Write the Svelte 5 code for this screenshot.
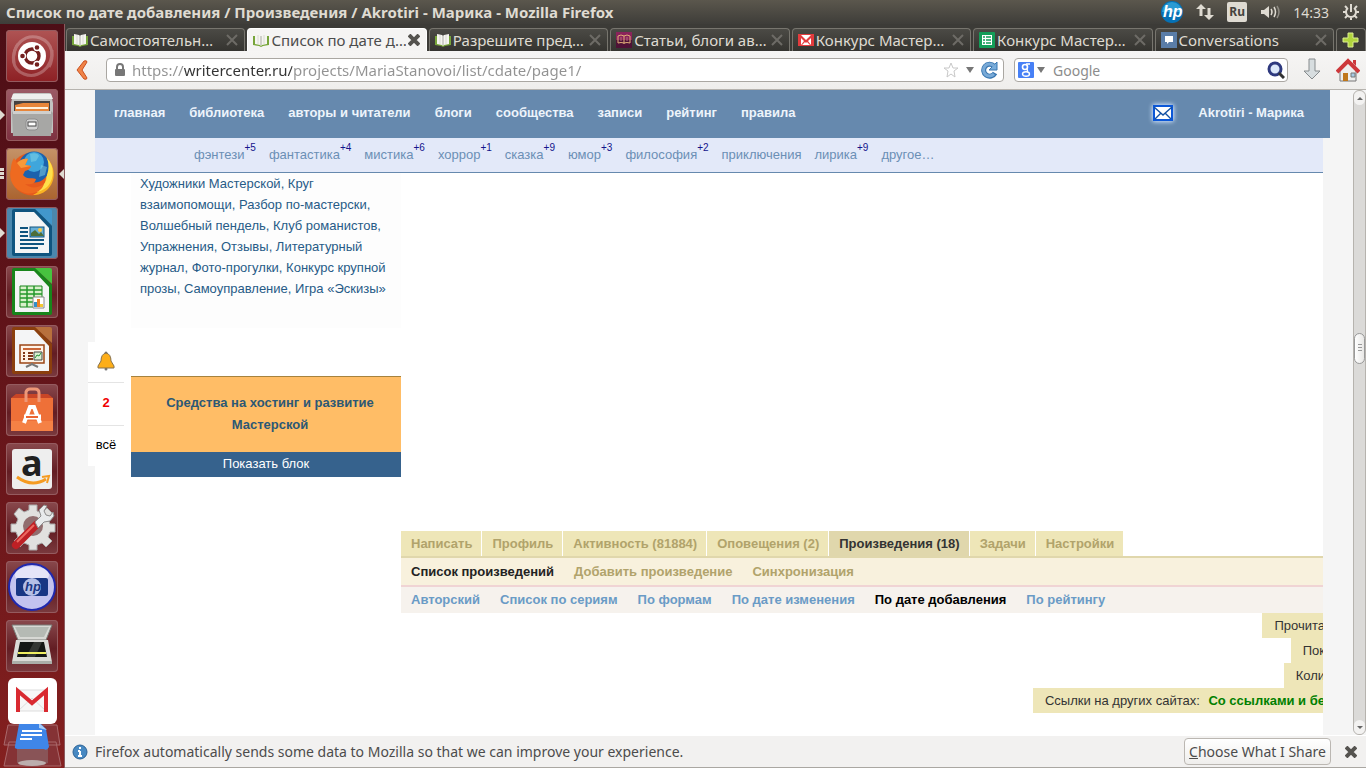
<script lang="ts">
	const launcher = [
		{ id: 'dash', label: 'Dash' },
		{ id: 'files', label: 'Files', running: true },
		{ id: 'firefox', label: 'Firefox', running: true, focused: true },
		{ id: 'writer', label: 'Writer', running: true },
		{ id: 'calc', label: 'Calc' },
		{ id: 'impress', label: 'Impress' },
		{ id: 'software', label: 'Software Center' },
		{ id: 'amazon', label: 'Amazon' },
		{ id: 'settings', label: 'Settings' },
		{ id: 'hp', label: 'HP' },
		{ id: 'scanner', label: 'Scanner' }
	];

	const tabs = [
		{ icon: 'book', title: 'Самостоятельн…' },
		{ icon: 'book', title: 'Список по дате д…', active: true },
		{ icon: 'book', title: 'Разрешите пред…' },
		{ icon: 'article', title: 'Статьи, блоги ав…' },
		{ icon: 'mail', title: 'Конкурс Мастер…' },
		{ icon: 'sheet', title: 'Конкурс Мастер…' },
		{ icon: 'chat', title: 'Conversations' }
	];

	const nav = ['главная', 'библиотека', 'авторы и читатели', 'блоги', 'сообщества', 'записи', 'рейтинг', 'правила'];

	const genres = [
		{ name: 'фэнтези', count: 5 },
		{ name: 'фантастика', count: 4 },
		{ name: 'мистика', count: 6 },
		{ name: 'хоррор', count: 1 },
		{ name: 'сказка', count: 9 },
		{ name: 'юмор', count: 3 },
		{ name: 'философия', count: 2 },
		{ name: 'приключения', count: 0 },
		{ name: 'лирика', count: 9 },
		{ name: 'другое…', count: 0 }
	];

	const communities = [
		'Художники Мастерской',
		'Круг взаимопомощи',
		'Разбор по-мастерски',
		'Волшебный пендель',
		'Клуб романистов',
		'Упражнения',
		'Отзывы',
		'Литературный журнал',
		'Фото-прогулки',
		'Конкурс крупной прозы',
		'Самоуправление',
		'Игра «Эскизы»'
	];

	const sections = ['Написать', 'Профиль', 'Активность (81884)', 'Оповещения (2)', 'Произведения (18)', 'Задачи', 'Настройки'];
	const actions = ['Список произведений', 'Добавить произведение', 'Синхронизация'];
	const sorts = ['Авторский', 'Список по сериям', 'По формам', 'По дате изменения', 'По дате добавления', 'По рейтингу'];

	let url = 'https://writercenter.ru/projects/MariaStanovoi/list/cdate/page1/';
	let query = '';
</script>

{#snippet appIcon(id)}
	<svg viewBox="0 0 52 52" width="52" height="52" aria-hidden="true">
		{#if id === 'dash'}
			<g fill="none" stroke="#fff" stroke-width="3" opacity=".25">
				<path d="M8 33C5 14 20 3 34 8s14 20 9 29" />
				<path d="M46 20C47 39 31 49 18 44S5 25 12 14" />
			</g>
			<circle cx="26" cy="26" r="14" fill="#fff" />
			<circle cx="26" cy="26" r="7" fill="none" stroke="#74201f" stroke-width="3.4" />
			<g stroke="#fff" stroke-width="1.4" fill="#74201f">
				<circle cx="16.5" cy="26" r="3" />
				<circle cx="31" cy="17.5" r="3" />
				<circle cx="31" cy="34.5" r="3" />
			</g>
		{:else if id === 'files'}
			<path d="M7 5q0-1 2-1h34q2 0 2 1l2 9v30H5V14z" fill="#c3c3c1" />
			<path d="M7 5h38l2 5H5z" fill="#eee" />
			<path d="M8 12h36v12H8z" fill="#464241" />
			<path d="M9 16l8-2h26v9H9z" fill="#e8863a" />
			<path d="M10 18h32v2H10z" fill="#fff1dc" />
			<path d="M7 22h38l2 2-2 23H7L6 24z" fill="#a7a7a5" />
			<path d="M7 22h38v3H7z" fill="#cfcfcd" />
			<rect x="20" y="30" width="12" height="11" rx="3" fill="#d3d3d3" stroke="#8d8d8d" />
			<rect x="22" y="33" width="8" height="4" fill="#fff" stroke="#444" />
		{:else if id === 'firefox'}
			<circle cx="26" cy="26" r="21.5" fill="#e65a1c" />
			<path d="M38 8c12 8 13 25 3 34-5 4-9 5-14 5 8-4 12-9 13-17z" fill="#f9b423" />
			<circle cx="28" cy="19" r="15.5" fill="#1c62ad" />
			<circle cx="28" cy="14" r="10" fill="#3fa6dc" />
			<path d="M24 6q7-2 9 2l-3 5-5 1zM35 17l6 2-2 8-6 2z" fill="#86d6e6" opacity=".5" />
			<path d="M41 10c7 7 8 20 1 28-5 5-10 6-14 6 9-5 13-10 13-17 2-6 2-11 0-17z" fill="#ffe04a" />
			<path d="M8 10l3 5c3-3 7-5 11-4l-3 6 6 1q-1 4-6 5l-2 4c4 5 8 2 13 4-1 5-6 6-11 5 6 5 13 4 19 0-2 7-10 11-19 9C8 42 2 32 5 21c0-4 1-8 3-11z" fill="#ee6a20" />
			<path d="M11 15c3-3 7-5 11-4l-3 6 6 1-10 2z" fill="#f79a3a" />
		{:else if id === 'writer' || id === 'calc' || id === 'impress'}
			{@const dark = id === 'writer' ? '#10547f' : id === 'calc' ? '#18851b' : '#8b3f0e'}
			{@const light = id === 'writer' ? '#4297cc' : id === 'calc' ? '#47c33f' : '#b8703c'}
			<path d="M8 2h22l16 17v28q0 2-2 2H8q-2 0-2-2V4q0-2 2-2z" fill={dark} />
			<path d="M29 2h15q2 0 2 2v14z" fill={light} />
			<path d="M9 5h19l15 16v25H9z" fill="#f4f5f6" />
			{#if id === 'writer'}
				<path d="M14 21h8M14 25h8M14 29h8M14 33h24M14 37h24M14 41h18" stroke={dark} stroke-width="2" />
				<rect x="24" y="20" width="14" height="10" fill="#67afd7" stroke={dark} />
				<path d="M25 29v-3l4-3 4 4 2-2 3 4z" fill="#4d6e38" /><circle cx="34" cy="23" r="2" fill="#f8c840" />
			{:else if id === 'calc'}
				<path d="M14 20h22v21H14z" fill="#d9f0cb" stroke={dark} />
				<path d="M14 24h22M14 28h22M14 32h22M14 36h22M21 20v21M28 20v21" stroke="#23982b" stroke-width="1.5" />
				<path d="M27 31h11v11H27z" fill="#fff" stroke="#888" /><path d="M28 36h3v5h-3z" fill="#328fc8" /><path d="M31 33h3v8h-3z" fill="#f08124" /><path d="M34 38h3v3h-3z" fill="#f3c832" />
			{:else}
				<path d="M14 20h24v18H14z" fill="#fff3e7" stroke="#9c4616" stroke-width="1.5" />
				<path d="M17 24h18" stroke="#ca6637" stroke-width="2" />
				<path d="M17 28h2m3 0h5m-10 3h2m3 0h5m-10 3h2m3 0h5" stroke="#803719" stroke-width="2" />
				<path d="M28 27h8v8h-8z" fill="#d8efd1" stroke="#444" /><path d="M29 33l2-3 2 1 2-3" stroke="#269537" fill="none" />
				<path d="M26 38v2m-6 2l6-3 6 3" stroke="#777" stroke-width="2" fill="none" />
			{/if}
		{:else if id === 'software'}
			<path d="M5 14h42v33H5z" fill="#ee7038" /><path d="M5 14l5-4h32l5 4z" fill="#c84526" />
			<path d="M5 37h42v10H5z" fill="#f58145" />
			<path d="M20 18V8q1-3 4-3h5q4 0 4 4v9" stroke="#ed9878" stroke-width="3" fill="none" />
			<path d="M18 39l6-16h4l6 16" stroke="#fff" stroke-width="4" fill="none" />
			<path d="M18 33h17" stroke="#fff" stroke-width="5" /><path d="M20 33h12" stroke="#ec6531" stroke-width="2" />
		{:else if id === 'amazon'}
			<rect x="6" y="6" width="40" height="40" rx="3" fill="#eee" />
			<text x="15" y="33" font-family="Noto Sans, sans-serif" font-size="36" font-weight="700" fill="#202020">a</text>
			<path d="M11 34q15 11 29 2" stroke="#f59b22" stroke-width="3" fill="none" /><path d="M36 34l7-1-2 7" stroke="#f59b22" stroke-width="2" fill="none" />
		{:else if id === 'settings'}
			<g transform="translate(27 24)">
				<path d="M-4-21h8v6l5 2 5-5 6 6-5 5 2 5h5v8h-5l-2 5 4 4-6 6-4-4-5 2v5h-8v-5l-5-2-4 4-6-6 4-4-2-5h-5v-8h5l2-5-4-5 5-6 5 4 5-2z" fill="#e1e1df" stroke="#aaa" />
				<circle r="10" fill="#916d6e" />
			</g>
			<path d="M10 43l20-20" stroke="#be2025" stroke-width="8" stroke-linecap="round" /><path d="M11 40l17-17" stroke="#ed6960" stroke-width="2" />
			<path d="M29 20l6-6-2-6 5-5 3 1-3 5 2 4 4 1 3-4 1 4-4 5-6 1-6 6z" fill="#e8ebec" stroke="#8c8c8c" />
		{:else if id === 'hp'}
			<circle cx="26" cy="26" r="23" fill="#c3c3ef" stroke="#2029ae" stroke-width="2" />
			<ellipse cx="26" cy="14" rx="17" ry="9" fill="#fff" opacity=".55" />
			<rect x="10" y="17" width="32" height="18" rx="2" fill="#183684" />
			<circle cx="26" cy="26" r="9" fill="#b4bfe6" /><text x="19" y="30" font-family="Liberation Sans, sans-serif" font-size="13" font-style="italic" font-weight="700" fill="#183684">hp</text>
		{:else if id === 'scanner'}
			<path d="M6 5h40l-6 15H12z" fill="#d7d8d4" stroke="#7a7d78" /><path d="M9 7h34l-5 10H14z" fill="#b5bab4" />
			<path d="M10 20h32l4 22H6z" fill="#dadbd7" /><path d="M14 22h24l3 15H11z" fill="#141714" />
			<path d="M28 22h8l-7 15h-9z" fill="#343733" /><path d="M12 33h28" stroke="#eeee61" stroke-width="2" /><path d="M6 41h40v3H6z" fill="#aaafa9" />
		{/if}
	</svg>
{/snippet}

{#snippet favicon(id)}
	<svg viewBox="0 0 16 16" width="16" height="16" aria-hidden="true">
		{#if id === 'book'}
			<path d="M0 4h16v9l-6 1-2 1-2-1-6-1z" fill="#77a53a" />
			<path d="M2 2l5 1 1 1 1-1 5-1v10l-5 1-1 1-1-1-5-1z" fill="#f5f5f0" />
			<path d="M8 4v9" stroke="#a9a9a4" />
			<path d="M5 3v9M11 3v9" stroke="#d9d9d4" />
		{:else if id === 'article'}
			<path d="M0 0h16v16H0z" fill="#4f1236" /><path d="M0 0h16v8H0z" fill="#8a235b" /><path d="M2 4q3-2 6 0 3-2 6 0v7q-3-1-6 0-3-1-6 0zM8 4v8" fill="none" stroke="#e0ae78" />
			<path d="M5 5v4M11 5v4" stroke="#b5717a" />
		{:else if id === 'mail'}
			<path d="M0 2h16v12H0z" fill="#e33b3d" /><path d="M3 3h10L8 8zM3 6l3 3-3 4zM13 6l-3 3 3 4zM4 13l3-3 1 1 1-1 3 3z" fill="#fff" />
		{:else if id === 'sheet'}
			<rect width="16" height="16" rx="1" fill="#139d58" /><path d="M3 3h10v10H3z" fill="#fff" /><path d="M4 5h2m1 0h5M4 8h2m1 0h5M4 11h2m1 0h5" stroke="#139d58" stroke-width="1.6" />
		{:else}
			<path d="M0 0h16v16H0z" fill="#5a7da8" /><path d="M4 4h8v6H8l-2 2v-2H4z" fill="#fff" />
		{/if}
	</svg>
{/snippet}

{#snippet cross(weight)}
	<svg viewBox="0 0 12 12" width="12" height="12" aria-hidden="true"><path d="M1 1l10 10M11 1L1 11" stroke="currentColor" stroke-width={weight} /></svg>
{/snippet}

<div class="desktop">
	<header class="panel">
		<h1>Список по дате добавления / Произведения / Akrotiri - Марика - Mozilla Firefox</h1>
		<div class="indicators">
			<svg viewBox="0 0 22 22" width="22" height="22" aria-hidden="true"><circle cx="11" cy="11" r="11" fill="#0571b5" /><path d="M1 11a10 10 0 0 1 20 0" fill="#2b9bd3" /><text x="2" y="16" font-family="Liberation Sans, sans-serif" font-size="16" font-style="italic" font-weight="700" fill="#fff">hp</text></svg>
			<svg viewBox="0 0 18 18" width="18" height="18" aria-hidden="true"><path d="M5 13V5M13 5v8" stroke="#dfdbd2" stroke-width="3" /><path d="M0 6l5-5 5 5zM8 12l5 5 5-5z" fill="#dfdbd2" /></svg>
			<span class="keyboard">Ru</span>
			<svg viewBox="0 0 20 18" width="20" height="18" aria-hidden="true"><path d="M1 7h3l5-4v12l-5-4H1z" fill="#dfdbd2" /><path d="M11 6q2 3 0 6M14 4q3 5 0 10" fill="none" stroke="#dfdbd2" stroke-width="1.5" /><path d="M17 3q4 6 0 12" fill="none" stroke="#8d8a82" stroke-width="1.5" /></svg>
			<time>14:33</time>
			<svg viewBox="0 0 18 18" width="18" height="18" aria-hidden="true"><path d="M6 5a5 5 0 1 0 6 0M9 1v8M9 15v2M1 9h3M14 9h3M3 3l2 2M15 3l-2 2M3 15l2-2M15 15l-2-2" fill="none" stroke="#dfdbd2" stroke-width="2" /></svg>
		</div>
	</header>

	<div class="workspace">
		<nav class="launcher" aria-label="Launcher">
			{#each launcher as app (app.id)}
				<button class="app {app.id}" class:running={app.running} class:focused={app.focused} aria-label={app.label}>
					{@render appIcon(app.id)}
				</button>
			{/each}
			<button class="stack" aria-label="Gmail">
				<svg viewBox="0 0 65 92" width="65" height="92" aria-hidden="true">
					<path d="M8 50h49l3 20H4zM9 67h47l5 24H4z" fill="#853235" stroke="#a9686b" />
					<path d="M17 67h31v21q-15 7-31 0z" fill="#895457" /><ellipse cx="32" cy="88" rx="14" ry="3" fill="#bcaead" />
					<path d="M19 49h22l5 5 3 18q-2 4-5 2H18q-4 0-3-3z" fill="#3f86e8" /><path d="M39 48l8 7-8-2z" fill="#a9cef7" />
					<path d="M22 56h20M21 60h21M20 64h12" stroke="#fff" stroke-width="2" />
					<rect x="8" y="3" width="49" height="46" rx="6" fill="#fff" />
					<path d="M18 15h28v21H18z" fill="#f7f7f7" stroke="#ddd" /><path d="M18 36l14-13 14 13" fill="none" stroke="#ddd" />
					<path d="M18 37V16l14 12 14-12v21" fill="none" stroke="#d92a31" stroke-width="4" />
				</svg>
			</button>
		</nav>

		<div class="browser">
			<div class="tabs" role="tablist">
				{#each tabs as tab}
					<div class="tab" class:active={tab.active} role="tab" aria-selected={!!tab.active} tabindex="0">
						{@render favicon(tab.icon)}
						<span>{tab.title}</span>
						<button aria-label="Закрыть">{@render cross(tab.active ? 4 : 2)}</button>
					</div>
				{/each}
				<button class="new-tab" aria-label="Новая вкладка">
					<svg viewBox="0 0 18 18" width="18" height="18" aria-hidden="true"><path d="M6 2h5v5h5v4h-5v5H6v-5H1V7h5z" fill="#b0d43d" stroke="#dced92" /></svg>
				</button>
			</div>

			<div class="toolbar">
				<button class="back" aria-label="Назад">
					<svg viewBox="0 0 14 22" width="14" height="22" aria-hidden="true"><path d="M9 2q3-1 3 1l-5 8 5 8q0 2-3 1L2 11z" fill="#f08347" stroke="#c9501f" /></svg>
				</button>
				<div class="field address">
					<svg viewBox="0 0 12 14" width="12" height="14" aria-hidden="true"><path d="M3 6V4q0-3 3-3t3 3v2" fill="none" stroke="#777" stroke-width="2" /><rect x="1" y="6" width="10" height="7" rx="1" fill="#777" /></svg>
					<input aria-label="Адрес" bind:value={url} />
					<svg viewBox="0 0 16 16" width="16" height="16" aria-hidden="true"><path d="M8 1l2 5h5l-4 3 1 6-4-3-4 3 1-6-4-3h5z" fill="#fff" stroke="#c8c8c8" /></svg>
					<svg viewBox="0 0 10 8" width="10" height="8" aria-hidden="true"><path d="M1 1h8L5 7z" fill="#777" /></svg>
					<svg viewBox="0 0 18 18" width="18" height="18" aria-hidden="true"><path d="M14 12a6 6 0 1 1-1-7" fill="none" stroke="#3977b1" stroke-width="5" /><path d="M16 1v8H8z" fill="#78addc" stroke="#3977b1" /><path d="M13 13a6 6 0 1 1 0-8" fill="none" stroke="#79aad7" stroke-width="3" /></svg>
				</div>
				<div class="field search">
					<svg viewBox="0 0 16 16" width="16" height="16" aria-hidden="true"><rect width="16" height="16" rx="1" fill="#4780f6" /><circle cx="7" cy="5" r="2.5" fill="none" stroke="#fff" stroke-width="1.6" /><ellipse cx="8" cy="12" rx="3.5" ry="2.3" fill="none" stroke="#fff" stroke-width="1.4" /><path d="M8 2h4M9 7q1 1 0 3" fill="none" stroke="#fff" stroke-width="1.4" /></svg>
					<svg viewBox="0 0 10 8" width="10" height="8" aria-hidden="true"><path d="M1 1h8L5 7z" fill="#777" /></svg>
					<input aria-label="Поиск" placeholder="Google" bind:value={query} />
					<svg viewBox="0 0 18 18" width="18" height="18" aria-hidden="true"><circle cx="8" cy="8" r="6" fill="#dce8f9" stroke="#2e397e" stroke-width="3" /><path d="M12 12l5 5" stroke="#333" stroke-width="3" /></svg>
				</div>
				<button class="tool" aria-label="Загрузки">
					<svg viewBox="0 0 20 24" width="20" height="24" aria-hidden="true"><path d="M7 1h6v12h5l-8 8-8-8h5z" fill="#d7dddf" stroke="#868b8d" /></svg>
				</button>
				<button class="tool" aria-label="Домой">
					<svg viewBox="0 0 24 24" width="24" height="24" aria-hidden="true"><path d="M4 12l8-7 8 7v11H4z" fill="#eee" stroke="#777" /><path d="M1 14L12 3l11 11" fill="none" stroke="#cd383b" stroke-width="4" /><path d="M17 2h3v6l-3-3z" fill="#cd383b" /><path d="M7 15h5v8H7z" fill="#bf771b" /><path d="M15 15h4v4h-4z" fill="#a7cbe6" stroke="#777" /></svg>
				</button>
			</div>

			<div class="viewport">
				<div class="page">
					<header class="site-header">
						<nav>
							{#each nav as item}<a href="#top">{item}</a>{/each}
						</nav>
						<a class="inbox" href="#inbox" aria-label="Почта">
							<svg viewBox="0 0 20 16" width="20" height="16" aria-hidden="true"><path d="M1 1h18v14H1z" fill="#fff" stroke="#0b57d8" stroke-width="2" /><path d="M1 2l9 8 9-8M2 14l6-6M18 14l-6-6" fill="none" stroke="#1451a3" stroke-width="1.4" /></svg>
						</a>
						<a href="#user">Akrotiri - Марика</a>
					</header>
					<div class="sheet">
						<nav class="genres">
							{#each genres as genre}
								<a href="#genre">{genre.name}{#if genre.count}<sup>+{genre.count}</sup>{/if}</a>
							{/each}
						</nav>
						<div class="columns">
							<aside>
								<p class="communities">
									{#each communities as community, i}<a href="#community">{community}</a>{i < communities.length - 1 ? ', ' : ''}{/each}
								</p>
								<section class="funds">
									<h2>Средства на хостинг и развитие Мастерской</h2>
									<button>Показать блок</button>
								</section>
							</aside>
							<main>
								<nav class="sections">
									{#each sections as item}<a href="#section" class:current={item.startsWith('Произведения')}>{item}</a>{/each}
								</nav>
								<nav class="actions">
									{#each actions as item, i}<a href="#action" class:current={i === 0}>{item}</a>{/each}
								</nav>
								<nav class="sorts">
									{#each sorts as item, i}<a href="#sort" class:current={i === 4}>{item}</a>{/each}
								</nav>
								<div class="filters">
									<div>Прочита</div>
									<div>Пок</div>
									<div>Коли</div>
									<div>Ссылки на других сайтах: <a href="#links">Со ссылками и бе</a></div>
								</div>
							</main>
						</div>
					</div>
				</div>
				<div class="notices">
					<a href="#bell" aria-label="Оповещения">
						<svg viewBox="0 0 18 20" width="18" height="20" aria-hidden="true"><circle cx="9" cy="2" r="1.5" fill="#777" /><circle cx="9" cy="18" r="1.5" fill="#777" /><path d="M9 2q5 1 5 8l3 5v2H1v-2l3-5q0-7 5-8z" fill="#fdae19" stroke="#87724e" /></svg>
					</a>
					<a class="count" href="#new">2</a>
					<a href="#all">всё</a>
				</div>
				<div class="scrollbar" aria-hidden="true">
					<i class="up"></i>
					<i class="thumb"></i>
					<i class="down"></i>
				</div>
			</div>

			<footer class="infobar">
				<svg viewBox="0 0 16 16" width="16" height="16" aria-hidden="true"><circle cx="8" cy="8" r="7" fill="#4889c2" stroke="#2c6295" /><path d="M8 3v2M8 7v5M6 12h4M6 7h2" stroke="#fff" stroke-width="2" /></svg>
				<p>Firefox automatically sends some data to Mozilla so that we can improve your experience.</p>
				<button class="choose"><u>C</u>hoose What I Share</button>
				<button class="dismiss" aria-label="Закрыть">{@render cross(4)}</button>
			</footer>
		</div>
	</div>
</div>

<style>
	:global(body) {
		background: #f5f5f5;
	}

	.desktop {
		display: flex;
		flex-direction: column;
		height: 100vh;
		overflow: hidden;
		font-family: 'Noto Sans', sans-serif;
		font-size: 14px;
		color: #4c4c4c;
	}

	.desktop * {
		box-sizing: border-box;
	}

	button {
		padding: 0;
		border: 0;
		background: none;
		color: inherit;
		font: inherit;
	}

	a {
		color: inherit;
		text-decoration: none;
	}

	svg {
		display: block;
		flex: none;
	}

	h1, h2, p {
		margin: 0;
	}

	.panel {
		display: flex;
		align-items: center;
		justify-content: space-between;
		height: 24px;
		padding: 0 6px;
		background: linear-gradient(#5b574d, #3e3d39);
		color: #dfdbd2;
	}

	.panel h1 {
		font-size: 15px;
		line-height: 24px;
		white-space: nowrap;
	}

	.indicators {
		display: flex;
		align-items: center;
		gap: 13px;
	}

	.keyboard {
		width: 20px;
		height: 20px;
		border-radius: 2px;
		background: #dfdbd2;
		color: #45433e;
		font-size: 12px;
		font-weight: bold;
		line-height: 20px;
		text-align: center;
	}

	.workspace {
		display: flex;
		flex: 1;
		min-height: 0;
	}

	.launcher {
		display: flex;
		flex: none;
		flex-direction: column;
		align-items: center;
		gap: 7px;
		width: 65px;
		padding-top: 6px;
		border-right: 1px solid #8b5a5e;
		background: linear-gradient(#4d0e16, #6c171b 65%, #84201f);
		overflow: hidden;
	}

	.app {
		position: relative;
		flex: none;
		width: 52px;
		height: 52px;
		border-radius: 4px;
		background: linear-gradient(#89494d, #631d23 55%, #7a3a3e);
		box-shadow: inset 0 0 0 1px #955b5f;
	}

	.app.dash {
		background: linear-gradient(#af5454, #8d2024);
	}

	.app.files {
		background: linear-gradient(#9c5a66, #7d3040);
	}

	.app.firefox {
		background: linear-gradient(#c59368, #aa632f);
	}

	.app.writer {
		background: #4b87ad;
	}

	.app.running::before,
	.app.focused::after {
		content: '';
		position: absolute;
		top: 21px;
		left: -6px;
		border: 5px solid transparent;
		border-left-color: #dfdbd2;
		border-right-width: 0;
	}

	.app.focused::before {
		top: 20px;
		height: 11px;
		width: 4px;
		border: 0;
		background: repeating-linear-gradient(#dfdbd2 0 3px, transparent 3px 4px);
	}

	.app.focused::after {
		left: auto;
		right: -6px;
		border-width: 5px 5px 5px 0;
		border-right-color: #dfdbd2;
	}

	.stack {
		flex: none;
		margin-top: -4px;
	}

	.browser {
		display: flex;
		flex: 1;
		flex-direction: column;
		min-width: 0;
		background: #f2f1f0;
	}

	.tabs {
		display: flex;
		gap: 2px;
		height: 27px;
		padding: 4px 0 0 1px;
		background: #3c3b37;
		color: #dfdbd2;
		font-size: 15px;
	}

	.tab {
		display: flex;
		flex: 1;
		align-items: center;
		gap: 2px;
		min-width: 0;
		padding: 0 6px 0 5px;
		border: 1px solid #77756e;
		border-bottom: 0;
		border-radius: 4px 4px 0 0;
		background: linear-gradient(#4b4a45, #353430);
	}

	.tab span {
		flex: 1;
		overflow: hidden;
		line-height: 22px;
		white-space: nowrap;
	}

	.tab button {
		color: #6d6b66;
	}

	.tab.active {
		border-color: #fff;
		background: #f5f4f3;
		color: #4c4c4c;
	}

	.tab.active button {
		color: #55534f;
	}

	.new-tab {
		display: grid;
		place-items: center;
		width: 30px;
		border: 1px solid #77756e;
		border-bottom: 0;
		border-radius: 4px 4px 0 0;
	}

	.toolbar {
		display: flex;
		align-items: center;
		gap: 10px;
		height: 39px;
		padding: 0 6px 0 10px;
		border-bottom: 1px solid #b6b3ae;
		background: linear-gradient(#f6f5f4, #efeeec);
	}

	.back {
		width: 21px;
	}

	.tool {
		margin-left: 4px;
	}

	.field {
		display: flex;
		align-items: center;
		gap: 6px;
		height: 24px;
		border: 1px solid #aaa7a2;
		border-radius: 4px;
		background: #fff;
	}

	.address {
		flex: 1;
		padding: 0 4px 0 7px;
	}

	.search {
		gap: 2px;
		width: 274px;
		padding: 0 2px 0 3px;
	}

	.field input {
		flex: 1;
		min-width: 0;
		padding: 0;
		border: 0;
		outline: 0;
		background: none;
		color: #4c4c4c;
		font: inherit;
	}

	/* the host name stands out from the rest of the address */
	.address input {
		background: linear-gradient(to right, #929292 52px, #333 52px 160px, #929292 160px);
		background-clip: text;
		-webkit-background-clip: text;
		color: transparent;
		font-size: 15px;
	}

	.search input {
		padding-left: 5px;
	}

	.field input::placeholder {
		color: #8c8c8c;
	}

	.viewport {
		display: flex;
		position: relative;
		flex: 1;
		gap: 23px;
		min-height: 0;
		padding-left: 30px;
		overflow: hidden;
		background: #f5f5f5;
		font-family: 'Liberation Sans', Arial, sans-serif;
		font-size: 13px;
		line-height: 22px;
	}

	.page {
		display: flex;
		flex: 1;
		flex-direction: column;
		min-width: 0;
	}

	.site-header {
		display: flex;
		flex: none;
		align-items: center;
		height: 48px;
		padding: 0 26px 2px 19px;
		background: #6689ae;
		color: #edf4fb;
		font-weight: bold;
	}

	.site-header nav {
		display: flex;
		flex: 1;
		gap: 24px;
	}

	.inbox {
		margin-right: 25px;
		border-radius: 2px;
		box-shadow: 0 0 4px 1px #cde2ff;
	}

	.sheet {
		flex: 1;
		min-height: 0;
		margin-right: 7px;
		overflow: hidden;
		background: #fff;
	}

	.genres {
		display: flex;
		gap: 13px;
		height: 35px;
		padding: 6px 0 0 99px;
		border-bottom: 1px solid #6689ae;
		background: #e3e9f9;
		color: #6b8fb5;
		white-space: nowrap;
	}

	sup {
		color: #14148b;
		font-size: 10px;
		line-height: 0;
		vertical-align: 8px;
	}

	.columns {
		display: grid;
		grid-template-columns: 270px minmax(0, 1fr);
		row-gap: 54px;
		padding-left: 36px;
	}

	.communities {
		height: 155px;
		padding: 0 8px 0 9px;
		background: #fdfdfd;
		color: #275b87;
		line-height: 21px;
	}

	.funds {
		margin-top: 48px;
		border-top: 1px solid #a6823e;
		background: #ffbd66;
		text-align: center;
	}

	.funds h2 {
		padding: 15px 20px 16px 28px;
		color: #2c5875;
		font-size: 13px;
		line-height: 22px;
	}

	.funds button {
		width: 100%;
		height: 25px;
		padding-bottom: 2px;
		background: #36628d;
		color: #fff;
	}

	main {
		grid-row: 2;
		grid-column: 2;
		font-weight: bold;
		white-space: nowrap;
	}

	.sections,
	.actions,
	.sorts {
		display: flex;
	}

	.sections {
		gap: 1px;
		border-bottom: 2px solid #e0d7ac;
		color: #b1a36b;
		line-height: 25px;
	}

	.sections a {
		padding: 0 9px 0 10px;
		background: #eee6b8;
	}

	.sections .current {
		background: #e0d7ac;
		color: #333;
	}

	.actions,
	.sorts {
		gap: 20px;
		padding: 0 10px;
	}

	.actions {
		border-bottom: 2px solid #f0d4d4;
		background: #f8f1dd;
		color: #b1a36b;
		line-height: 27px;
	}

	.actions .current {
		color: #222;
	}

	.sorts {
		background: #f6f2ed;
		color: #6a9bc6;
		line-height: 26px;
	}

	.sorts .current {
		color: #000;
	}

	.filters {
		display: flex;
		flex-direction: column;
		align-items: flex-end;
		margin-right: -2px;
		color: #333;
		font-weight: normal;
		line-height: 25px;
	}

	.filters div {
		padding-left: 12px;
		background: #eee6b8;
	}

	.filters a {
		margin-left: 5px;
		color: #008000;
		font-weight: bold;
	}

	/* floats over the left edge of the page */
	.notices {
		position: absolute;
		top: 252px;
		left: 23px;
		width: 36px;
		background: #fff;
		color: #000;
	}

	.notices a {
		display: grid;
		place-items: center;
		height: 40px;
		padding-bottom: 3px;
	}

	.notices .count {
		height: 44px;
		border: 1px solid #e4e4e4;
		border-width: 1px 0;
		color: #f00000;
		font-weight: bold;
	}

	.scrollbar {
		display: flex;
		flex-direction: column;
		align-items: center;
		width: 13px;
		border: 1px solid #b6b3ae;
		border-radius: 6px;
		background: #dbdad8;
	}

	.scrollbar i {
		position: relative;
		width: 100%;
		height: 14px;
		border-radius: 6px;
		background: #f3f2f1;
	}

	.up::after,
	.down::after {
		content: '';
		position: absolute;
		top: 6px;
		left: 3px;
		border: 3px solid transparent;
		border-top-width: 0;
		border-bottom-color: #666;
	}

	.down::after {
		border-width: 3px 3px 0;
		border-top-color: #666;
	}

	.scrollbar .thumb {
		height: 31px;
		margin: auto 0;
		border: 1px solid #999;
		background: linear-gradient(to right, #fff, #e8e7e5);
	}

	.up + .thumb {
		margin-top: 228px;
	}

	.thumb::after {
		content: '';
		position: absolute;
		top: 10px;
		left: 3px;
		width: 4px;
		height: 7px;
		background: repeating-linear-gradient(#999 0 1px, transparent 1px 3px);
	}

	.infobar {
		display: flex;
		align-items: center;
		height: 33px;
		padding: 0 9px 0 7px;
		border-top: 1px solid #fff;
		border-bottom: 1px solid #aaa7a2;
		background: #f2f1f0;
	}

	.infobar p {
		flex: 1;
		padding-left: 7px;
	}

	.choose {
		height: 27px;
		margin-right: 14px;
		padding: 0 4px;
		border: 1px solid #bbb7b2;
		border-radius: 4px;
		background: linear-gradient(#fff, #efeeec);
	}

	.dismiss {
		color: #55534f;
	}
</style>
